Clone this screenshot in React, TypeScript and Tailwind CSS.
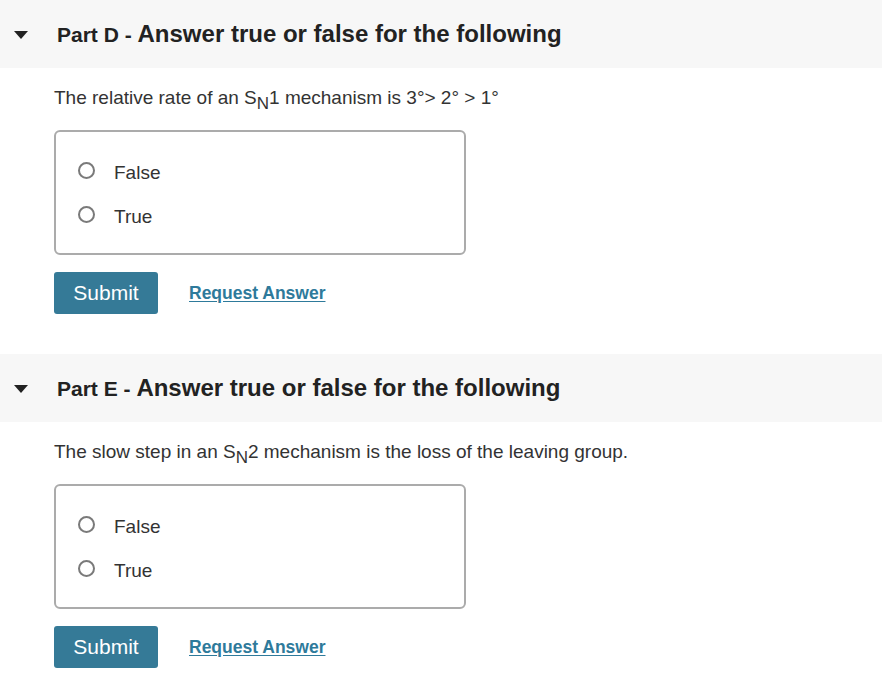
import { Fragment } from 'react';

/* Two collapsible "Part" blocks with a true/false radio question each */

type Part = {
  letter: string;
  question: React.ReactNode;
};

const Sub = ({ children }: { children: React.ReactNode }) => (
  <sub className="text-[17px] relative top-[5px] align-baseline leading-none">{children}</sub>
);

const parts: Part[] = [
  {
    letter: 'D',
    question: (
      <>
        The relative rate of an S<Sub>N</Sub>1 mechanism is 3°&gt; 2° &gt; 1°
      </>
    ),
  },
  {
    letter: 'E',
    question: (
      <>
        The slow step in an S<Sub>N</Sub>2 mechanism is the loss of the leaving group.
      </>
    ),
  },
];

function Radio({ label }: { label: string }) {
  return (
    <label className="flex items-center h-[44px] pl-[22px] cursor-pointer">
      <span className="w-[17px] h-[17px] mb-[6px] rounded-full border-2 border-[#7a7a7a] bg-white" />
      <span className="ml-[19px] text-[19px] text-[#333]">{label}</span>
    </label>
  );
}

function PartBlock({ part }: { part: Part }) {
  return (
    <section>
      {/* Header band */}
      <div className="h-[68px] bg-[#f7f7f7] flex items-center">
        <svg width="14" height="8" viewBox="0 0 14 8" className="ml-[14px] mt-[1px]">
          <path d="M0 0 H14 L7 8 Z" fill="#222" />
        </svg>
        <h2 className="ml-[29px] text-[#222] font-bold">
          <span className="text-[21px]">Part {part.letter} - </span>
          <span className="text-[24px]">Answer true or false for the following</span>
        </h2>
      </div>

      <div className="pl-[54px]">
        <p className="mt-[18px] text-[19px] leading-[24px] text-[#333]">{part.question}</p>

        <div className="mt-[20px] w-[412px] h-[125px] border-2 border-[#ababab] rounded-[6px] pt-[19px]">
          <Radio label="False" />
          <Radio label="True" />
        </div>

        <div className="mt-[17px] flex items-center">
          <button className="w-[104px] h-[42px] rounded-[3px] bg-[#357a97] text-white text-[21px]">
            Submit
          </button>
          <a href="#" className="ml-[31px] text-[17.5px] font-bold text-[#2e7a9b] underline underline-offset-2">
            Request Answer
          </a>
        </div>
      </div>
    </section>
  );
}

export default function App() {
  return (
    <div className="w-[882px] h-[686px] bg-white overflow-hidden" style={{ fontFamily: '"Liberation Sans", Arial, sans-serif' }}>
      {parts.map((p, i) => (
        <Fragment key={p.letter}>
          {i > 0 && <div className="h-[40px]" />}
          <PartBlock part={p} />
        </Fragment>
      ))}
    </div>
  );
}
